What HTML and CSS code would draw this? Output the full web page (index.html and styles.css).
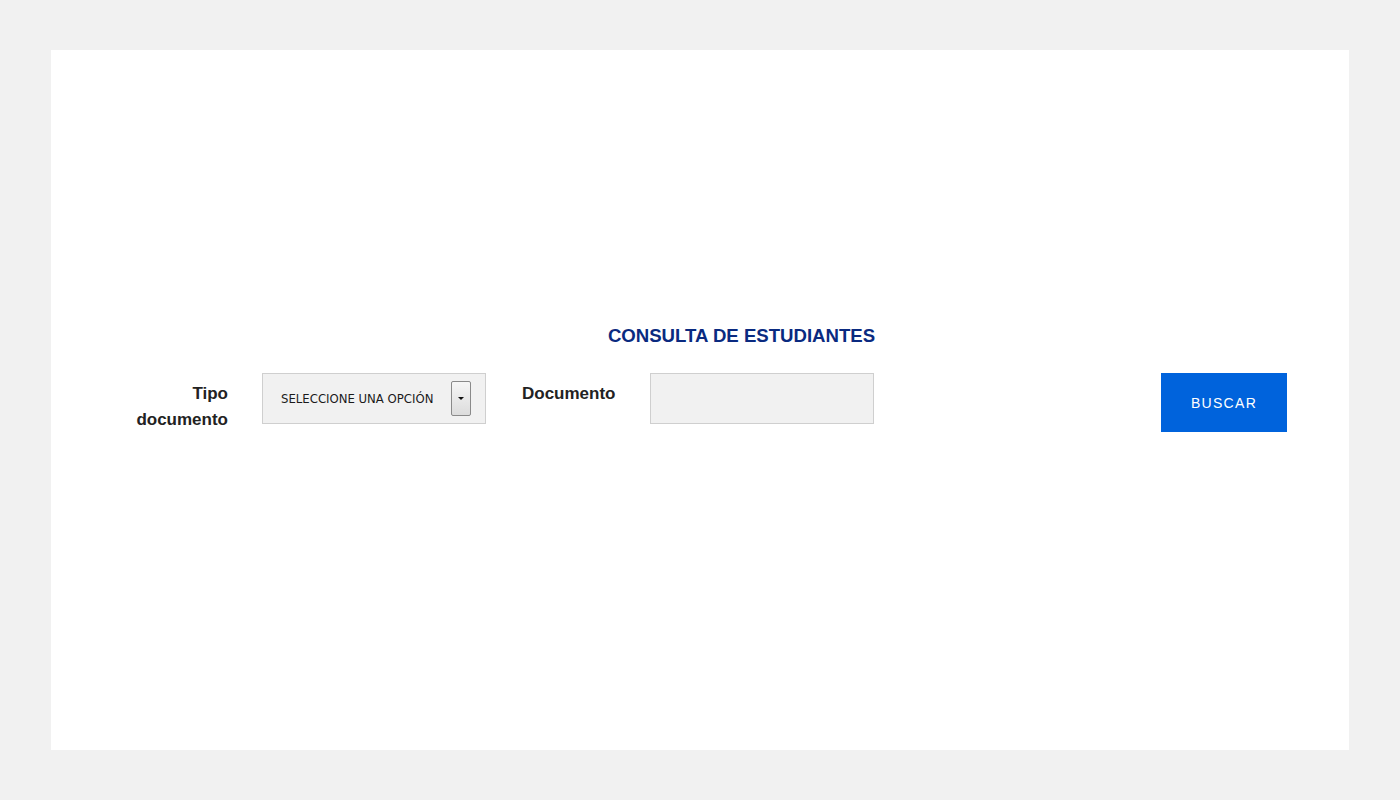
FILE: index.html
```html
<!DOCTYPE html>
<html lang="es">
<head>
    <meta charset="UTF-8">
    <meta name="viewport" content="width=device-width, initial-scale=1.0">
    <title>Consulta de Estudiantes</title>
    <link rel="stylesheet" href="styles.css">
</head>
<body>
    <div class="panel">
        <h1 class="titulo">CONSULTA DE ESTUDIANTES</h1>
        <div class="fila">
            <label class="etiqueta etiqueta-tipo" for="tipo">Tipo documento</label>
            <div class="selector" id="tipo">
                <span class="selector-texto">SELECCIONE UNA OPCIÓN</span>
                <span class="selector-flecha"><span class="triangulo"></span></span>
            </div>
            <label class="etiqueta etiqueta-doc" for="documento">Documento</label>
            <input type="text" id="documento" class="campo">
            <button class="boton">BUSCAR</button>
        </div>
    </div>
</body>
</html>
```

FILE: styles.css
```css
body {
    margin: 0;
    padding: 50px 51px;
    background-color: #f1f1f1;
    font-family: "Liberation Sans", Arial, sans-serif;
}
.panel {
    background: #ffffff;
    height: 700px;
    box-sizing: border-box;
    padding: 273px 62px 0 85px;
}
.titulo {
    margin: 0 0 25px 0;
    padding-left: 60px;
    text-align: center;
    font-family: "Liberation Sans", Arial, sans-serif;
    font-size: 18.6px;
    line-height: 25px;
    font-weight: bold;
    color: #0a2a80;
}
.fila {
    display: flex;
    align-items: flex-start;
}
.etiqueta {
    font-family: "Liberation Sans", Arial, sans-serif;
    font-size: 17px;
    font-weight: bold;
    line-height: 26px;
    color: #222222;
    padding-top: 8px;
}
.etiqueta-tipo {
    width: 92px;
    text-align: right;
    margin-right: 34px;
}
.etiqueta-doc {
    width: 128px;
    margin-left: 36px;
}
.selector {
    width: 224px;
    height: 51px;
    box-sizing: border-box;
    border: 1px solid #cfcfcf;
    background: #f1f1f1;
    display: flex;
    align-items: center;
    padding: 0 14px 0 18px;
}
.selector-texto {
    flex: 1;
    font-family: "DejaVu Sans Condensed", "Liberation Sans", sans-serif;
    font-size: 13px;
    color: #1a1a1a;
}
.selector-flecha {
    width: 20px;
    height: 35px;
    box-sizing: border-box;
    border: 1px solid #8a8a8a;
    border-radius: 2px;
    background: linear-gradient(#f6f6f6, #dcdcdc);
    display: flex;
    align-items: center;
    justify-content: center;
}
.triangulo {
    width: 0;
    height: 0;
    border-left: 3px solid transparent;
    border-right: 3px solid transparent;
    border-top: 3px solid #111111;
}
.campo {
    width: 224px;
    height: 51px;
    box-sizing: border-box;
    border: 1px solid #cfcfcf;
    background: #f1f1f1;
    margin: 0;
    padding: 0 10px;
    font-size: 14px;
}
.boton {
    margin-left: auto;
    width: 126px;
    height: 59px;
    border: none;
    background-color: #0063dc;
    color: #ffffff;
    font-family: "Liberation Sans", Arial, sans-serif;
    font-size: 14px;
    letter-spacing: 1.3px;
    cursor: pointer;
}
```
